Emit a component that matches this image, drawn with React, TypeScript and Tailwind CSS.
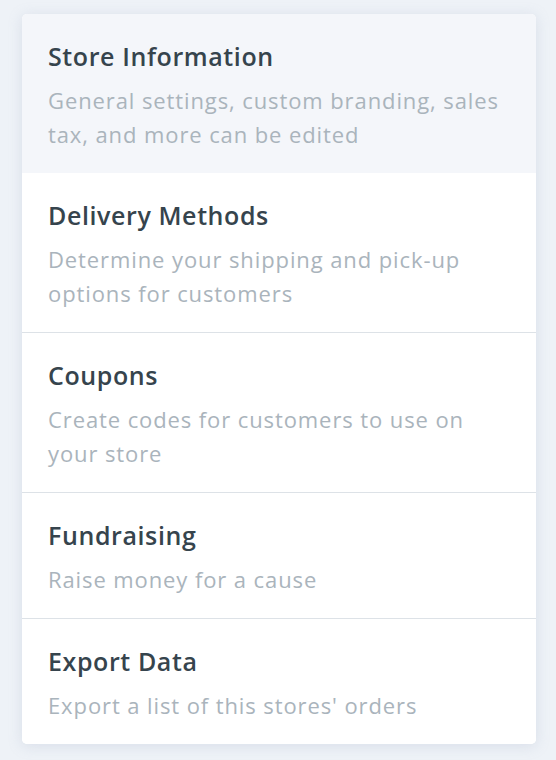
const sections = [
  {
    title: 'Store Information',
    description: 'General settings, custom branding, sales tax, and more can be edited',
    active: true,
  },
  {
    title: 'Delivery Methods',
    description: 'Determine your shipping and pick-up options for customers',
  },
  {
    title: 'Coupons',
    description: 'Create codes for customers to use on your store',
  },
  {
    title: 'Fundraising',
    description: 'Raise money for a cause',
  },
  {
    title: 'Export Data',
    description: "Export a list of this stores' orders",
  },
]

export default function App() {
  return (
    <div className="min-h-[760px] w-[556px] bg-[#eef2f7] pt-[14px] pl-[22px] font-['Open_Sans',sans-serif]">
      <div className="w-[514px] overflow-hidden rounded-[5px] bg-white shadow-[0_2px_14px_rgba(150,165,190,0.25)]">
        {sections.map((s, i) => (
          <div
            key={s.title}
            className={
              (s.active ? 'bg-[#f4f6fa] ' : 'bg-white ') +
              (i > 1 ? 'border-t border-[#dde2e7] ' : '') +
              'pl-[26px] pr-[20px] pt-[26px] pb-[22px]'
            }
          >
            <h3 className="text-[25px] leading-[32px] font-semibold tracking-[0.6px] text-[#36444d]">{s.title}</h3>
            <p className="mt-[11px] text-[22px] leading-[34px] tracking-[0.9px] text-[#aab4bc]">{s.description}</p>
          </div>
        ))}
      </div>
    </div>
  )
}
